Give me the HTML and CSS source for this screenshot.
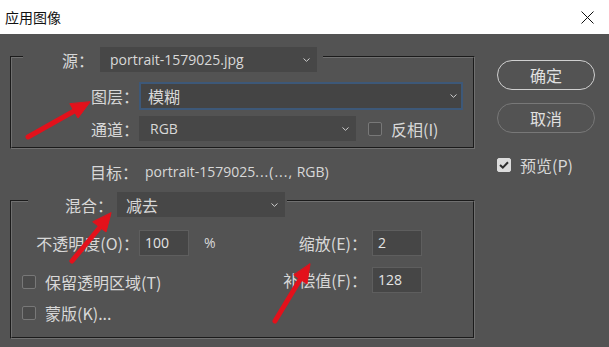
FILE: index.html
```html
<!DOCTYPE html>
<html lang="zh-CN">
<head>
  <meta charset="UTF-8">
  <meta name="viewport" content="width=device-width, initial-scale=1.0">
  <title>应用图像</title>
  <link rel="stylesheet" href="styles.css">
</head>
<body>
  <div class="titlebar">
    <span class="title">应用图像</span>
    <svg class="close" width="13" height="13" viewBox="0 0 13 13">
      <path d="M0.5 0.5 L12.5 12.5 M12.5 0.5 L0.5 12.5" stroke="#111" stroke-width="1" fill="none"/>
    </svg>
  </div>

  <div class="dialog">
    <div class="main">
      <fieldset class="group group-source">
        <legend class="legend legend-source">
          <span class="label label-source">源：</span>
          <div class="select select-source">
            <span class="latin">portrait-1579025.jpg</span>
            <svg class="chevron" width="7" height="4" viewBox="0 0 7 4"><path d="M0.5 0.5 L3.5 3.3 L6.5 0.5" stroke="#cfcfcf" fill="none"/></svg>
          </div>
        </legend>
        <div class="row">
          <span class="label label-wide">图层：</span>
          <div class="select select-layer">
            <span>模糊</span>
            <svg class="chevron" width="7" height="4" viewBox="0 0 7 4"><path d="M0.5 0.5 L3.5 3.3 L6.5 0.5" stroke="#cfcfcf" fill="none"/></svg>
          </div>
        </div>
        <div class="row row-channel">
          <span class="label label-wide">通道：</span>
          <div class="select select-channel">
            <span class="latin">RGB</span>
            <svg class="chevron" width="7" height="4" viewBox="0 0 7 4"><path d="M0.5 0.5 L3.5 3.3 L6.5 0.5" stroke="#cfcfcf" fill="none"/></svg>
          </div>
          <label class="check check-invert"><span class="box"></span>反相(I)</label>
        </div>
      </fieldset>

      <div class="target-row">
        <span class="label label-target">目标：</span>
        <span class="target latin">portrait-1579025<span class="dots">...(...,</span> RGB)</span>
      </div>

      <fieldset class="group group-blend">
        <legend class="legend legend-blend">
          <span class="label label-blend">混合：</span>
          <div class="select select-blend">
            <span>减去</span>
            <svg class="chevron" width="7" height="4" viewBox="0 0 7 4"><path d="M0.5 0.5 L3.5 3.3 L6.5 0.5" stroke="#cfcfcf" fill="none"/></svg>
          </div>
        </legend>
        <div class="blend-body">
          <div class="blend-left">
            <div class="row">
              <span class="label label-wide">不透明度(O)：</span>
              <div class="field latin">100</div>
              <span class="unit latin">%</span>
            </div>
            <label class="check check-first"><span class="box"></span>保留透明区域(T)</label>
            <label class="check check-second"><span class="box"></span>蒙版(K)...</label>
          </div>
          <div class="blend-right">
            <div class="row">
              <span class="label label-right">缩放(E)：</span>
              <div class="field latin">2</div>
            </div>
            <div class="row row-offset">
              <span class="label label-right">补偿值(F)：</span>
              <div class="field latin">128</div>
            </div>
          </div>
        </div>
      </fieldset>
    </div>

    <div class="side">
      <button class="btn btn-primary">确定</button>
      <button class="btn btn-cancel">取消</button>
      <label class="check check-preview">
        <span class="box checked">
          <svg width="10" height="8" viewBox="0 0 10 8"><path d="M1 4 L3.8 6.6 L9 1.2" stroke="#2e2e2e" stroke-width="2" fill="none"/></svg>
        </span>预览(P)
      </label>
    </div>
  </div>

  <!-- red annotation arrows drawn on top of the dialog -->
  <svg class="annotations" width="609" height="347" viewBox="0 0 609 347">
    <g stroke="#e3111b" stroke-linecap="round" fill="#e3111b">
      <line x1="28" y1="137" x2="76" y2="110" stroke-width="5"/>
      <polygon points="90,102 78,118 70,104" stroke-width="1"/>
      <line x1="72" y1="261" x2="101" y2="226" stroke-width="5"/>
      <polygon points="111,213 106,232 93,222" stroke-width="1"/>
      <line x1="275" y1="321" x2="301" y2="278" stroke-width="5"/>
      <polygon points="310,264 307,284 294,275" stroke-width="1"/>
    </g>
  </svg>
</body>
</html>
```

FILE: styles.css
```css
* {
  box-sizing: border-box;
}

body {
  margin: 0;
  width: 609px;
  height: 347px;
  overflow: hidden;
  position: relative;
  background: #535353;
  color: #d8d8d8;
  font-family: "Noto Sans CJK SC", "Noto Sans", sans-serif;
  font-size: 16px;
  line-height: 1;
}

.latin {
  font-family: "Open Sans", "Noto Sans CJK SC", sans-serif;
  font-size: 14px;
}

.titlebar {
  height: 34px;
  background: #fff;
  color: #111;
  display: flex;
  align-items: center;
  justify-content: space-between;
  padding: 0 15px 0 5px;
  font-size: 14px;
}

.dialog {
  display: flex;
  padding-left: 10px;
}

.main {
  width: 465px;
  display: flex;
  flex-direction: column;
  padding-top: 7px;
}

.group {
  margin: 0;
  padding: 0;
  min-width: 0;
  border: 2px groove #707070;
}

.legend {
  display: flex;
  align-items: center;
  padding: 0;
}

.legend-source {
  margin-left: 11px;
  padding: 6px 6px 0 0;
}

.legend-blend {
  margin-left: 16px;
  padding: 7px 2px 0 0;
}

.label {
  text-align: right;
  white-space: nowrap;
  flex-shrink: 0;
}

.label-source { width: 71px; margin-right: 6px; }
.label-wide { width: 127px; }
.label-target { width: 128px; margin-right: 7px; }
.label-blend { width: 85px; margin-right: 4px; }
.label-right { width: 127px; margin-right: 5px; }

.select {
  height: 25px;
  background: #474747;
  display: flex;
  align-items: center;
  justify-content: space-between;
  padding: 0 7px 0 10px;
}

.select-source { width: 217px; }
.select-layer {
  width: 324px;
  height: 28px;
  border: 2px solid #3d5878;
  background: #444;
  padding: 0 4px 0 7px;
}
.select-channel { width: 217px; padding-left: 11px; }
.select-blend { width: 168px; padding-left: 9px; }

.row {
  display: flex;
  align-items: center;
}

.group-source {
  padding: 10px 0 6px;
}

.row-channel {
  margin-top: 6px;
}

.check {
  display: flex;
  align-items: center;
  height: 20px;
}

.box {
  width: 14px;
  height: 14px;
  border: 1px solid #787878;
  border-radius: 2px;
  background: #4b4b4b;
  margin-right: 9px;
  display: flex;
  align-items: center;
  justify-content: center;
}

.box.checked {
  background: #dcdcdc;
  border-color: #dcdcdc;
}

.check-invert {
  margin-left: 12px;
}

.target-row {
  display: flex;
  align-items: center;
  height: 21px;
  margin: 12px 0 3px;
}

.dots {
  letter-spacing: 1px;
}

.group-blend {
  padding: 13px 0 14px;
}

.blend-body {
  display: flex;
}

.blend-left {
  width: 228px;
}

.field {
  width: 50px;
  height: 26px;
  background: #464646;
  border: 1px solid #5e5e5e;
  display: flex;
  align-items: center;
  padding-left: 5px;
  color: #e4e4e4;
}

.unit {
  margin-left: 15px;
}

.check-first {
  margin: 16px 0 0 10px;
}

.check-second {
  margin: 11px 0 0 10px;
}

.row-offset {
  margin-top: 11px;
}

.side {
  margin-left: 22px;
  padding-top: 26px;
  display: flex;
  flex-direction: column;
}

.btn {
  width: 98px;
  height: 30px;
  border-radius: 15px;
  background: transparent;
  color: #e0e0e0;
  font-family: inherit;
  font-size: 16px;
  padding: 0;
}

.btn-primary {
  border: 1.5px solid #d0d0d0;
}

.btn-cancel {
  margin-top: 13px;
  border: 1px solid #787878;
}

.check-preview {
  margin-top: 22px;
}

.annotations {
  position: absolute;
  top: 0;
  left: 0;
  pointer-events: none;
}
```
